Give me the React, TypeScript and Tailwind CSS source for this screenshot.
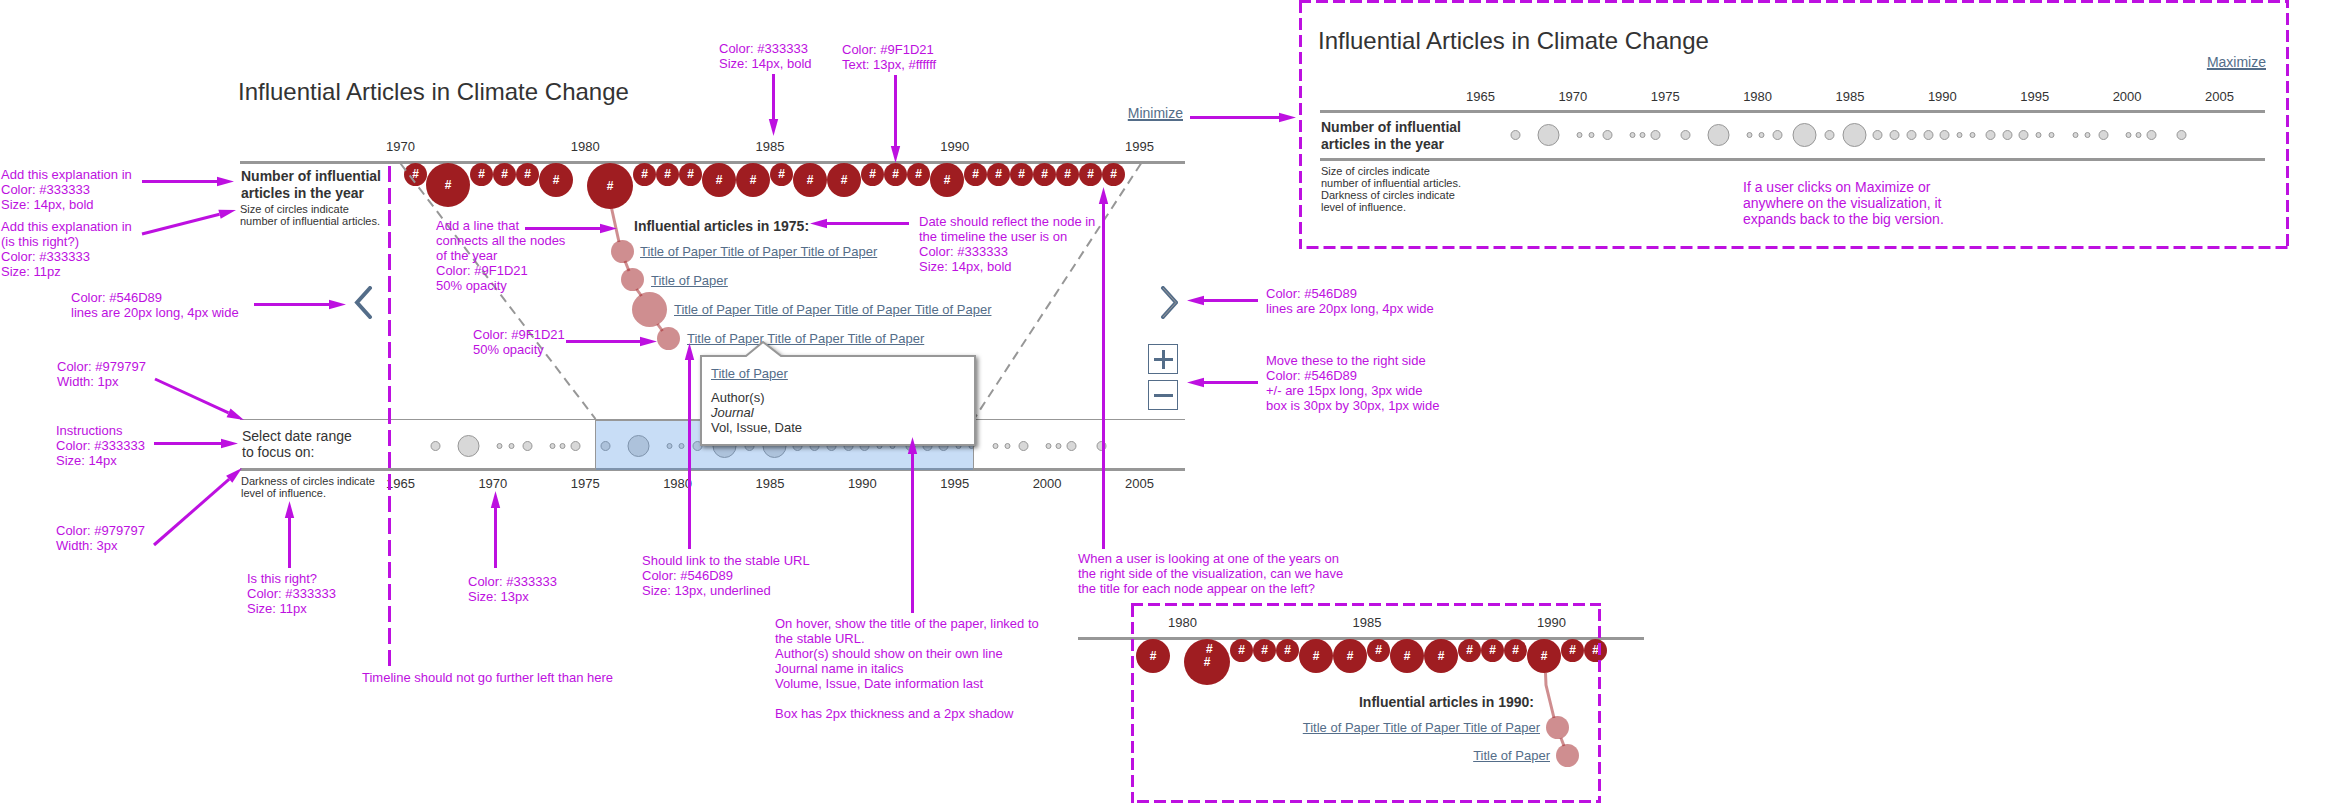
import type { ReactNode } from "react";

type Point = [number, number];

const NODE_CLASSES = {
  s: "size-[23px]",
  m: "size-[34px]",
  l: "size-[44px] -ml-px",
  xl: "size-[46px] ml-[14px]",
};
type NodeSize = keyof typeof NODE_CLASSES;

const MAIN_NODES: NodeSize[] = [
  "s", "l", "s", "s", "s", "m", "xl", "s", "s", "s", "m", "m", "s", "m", "m",
  "s", "s", "s", "m", "s", "s", "s", "s", "s", "s", "s",
];
const INSET_NODES = MAIN_NODES.slice(5, 21);

const OVERVIEW_YEARS = [1965, 1970, 1975, 1980, 1985, 1990, 1995, 2000, 2005];

/* [centre x, radius] measured from the left end of the axis */
const DOTS: Point[] = [
  [195.5, 4.5], [228.5, 10.5], [259.5, 2.5], [271.5, 2.5], [287.5, 4.5], [312.5, 2.5],
  [322.5, 2.5], [335.5, 4.5], [365.5, 4.5], [398.5, 10.5], [429.5, 2.5], [441.5, 2.5],
  [457.5, 4.5], [484.5, 11.5], [509.5, 4.5], [534.5, 11.5], [557.5, 4.5], [574.5, 4.5],
  [591.5, 4.5], [608.5, 4.5], [624.5, 4.5], [639.5, 2.5], [652.5, 2.5], [670.5, 4.5],
  [687.5, 4.5], [703.5, 4.5], [718.5, 2.5], [731.5, 2.5], [755.5, 2.5], [767.5, 2.5],
  [783.5, 4.5], [808.5, 2.5], [818.5, 2.5], [831.5, 4.5], [861.5, 4.5],
];

const ARROWS: [Point, Point][] = [
  [[142, 181.5], [234, 181.5]],
  [[142, 234], [236, 210]],
  [[254, 304.5], [346, 304.5]],
  [[155, 379], [244, 420]],
  [[154, 443.5], [238, 443.5]],
  [[154, 545], [242, 468]],
  [[289.5, 568], [289.5, 501]],
  [[495.5, 568], [495.5, 491]],
  [[689.5, 549], [689.5, 343]],
  [[912.5, 613], [912.5, 437]],
  [[1103.5, 549], [1103.5, 187]],
  [[773.5, 74], [773.5, 136]],
  [[895.5, 75], [895.5, 163]],
  [[525, 228.5], [617, 228.5]],
  [[566, 341.5], [657, 341.5]],
  [[909, 223.5], [810, 223.5]],
  [[1190, 117.5], [1296, 117.5]],
  [[1258, 300.5], [1187, 300.5]],
  [[1258, 382.5], [1187, 382.5]],
];

function Arrow({ from, to }: { from: Point; to: Point }) {
  const length = Math.hypot(to[0] - from[0], to[1] - from[1]);
  const ux = (to[0] - from[0]) / length;
  const uy = (to[1] - from[1]) / length;
  const bx = to[0] - ux * 17;
  const by = to[1] - uy * 17;
  return (
    <>
      <line x1={from[0]} y1={from[1]} x2={bx} y2={by} stroke="#BD10E0" strokeWidth="3" />
      <polygon
        fill="#BD10E0"
        points={`${to[0]},${to[1]} ${bx - uy * 4.7},${by + ux * 4.7} ${bx + uy * 4.7},${by - ux * 4.7}`}
      />
    </>
  );
}

function Note({ at, children }: { at: string; children: ReactNode }) {
  return (
    <p className={`absolute whitespace-pre text-[13px] leading-[15px] text-[#BD10E0] ${at}`}>
      {children}
    </p>
  );
}

function PaperLink({ times = 1 }: { times?: number }) {
  return (
    <a href="#paper" className="whitespace-nowrap text-[13px] leading-[15px] text-[#546D89] underline">
      {Array(times).fill("Title of Paper").join(" ")}
    </a>
  );
}

function Years({ years, className }: { years: number[]; className: string }) {
  return (
    <div className={`flex justify-between text-[13px] leading-[15px] ${className}`}>
      {years.map((year) => (
        <span key={year}>{year}</span>
      ))}
    </div>
  );
}

function Nodes({ sizes }: { sizes: NodeSize[] }) {
  return (
    <>
      {sizes.map((size, i) => (
        <button
          key={i}
          type="button"
          className={`flex shrink-0 items-center justify-center rounded-full bg-[#9F1D21] text-[12px] font-bold leading-[13px] text-white ${NODE_CLASSES[size]}`}
        >
          #
        </button>
      ))}
    </>
  );
}

function Dots({ className }: { className: string }) {
  return (
    <svg className={`block h-6 w-full ${className}`} aria-hidden="true">
      {DOTS.map(([x, r]) => (
        <circle key={x} cx={x} cy="12" r={r} fill="#D8D8D8" stroke="#979797" />
      ))}
    </svg>
  );
}

function Overview() {
  return (
    <section className="relative h-[249px] w-[990px] shrink-0 pl-[21px] pr-6 pt-4">
      <svg
        className="pointer-events-none absolute inset-0 size-full"
        viewBox="0 0 990 249"
        stroke="#BD10E0"
        strokeWidth="3"
        strokeDasharray="12 5"
        aria-hidden="true"
      >
        <path d="M0 1.5H990M1.5 1V249M988.5 247.5H0M988.5 246V0" />
      </svg>
      <h2 className="-ml-0.5 h-[38px] text-2xl leading-[50px]">Influential Articles in Climate Change</h2>
      <div className="-mr-px flex justify-end">
        <a href="#maximize" className="text-sm leading-4 text-[#546D89] underline decoration-2">
          Maximize
        </a>
      </div>
      <Years years={OVERVIEW_YEARS} className="ml-[146px] mr-[31px] mt-[19px]" />
      <div className="mt-[6px] flex h-[51px] items-center border-y-[3px] border-[#979797]">
        <h3 className="w-0 shrink-0 whitespace-pre pl-px text-sm font-bold leading-[17px]">
          {"Number of influential\narticles in the year"}
        </h3>
        <Dots className="-ml-px mb-0.5" />
      </div>
      <p className="mt-1 pl-px text-[11px] leading-3">
        Size of circles indicate
        <br />
        number of influential articles.
        <br />
        Darkness of circles indicate
        <br />
        level of influence.
      </p>
      <p className="absolute left-[444px] top-[179px] whitespace-pre text-sm leading-4 text-[#BD10E0]">
        {"If a user clicks on Maximize or\nanywhere on the visualization, it\nexpands back to the big version."}
      </p>
    </section>
  );
}

function Tooltip() {
  return (
    <div className="absolute left-[460px] top-[341px] h-[105px] w-[276px]">
      <svg
        className="absolute inset-0 size-full overflow-visible drop-shadow-[2px_2px_2px_rgba(0,0,0,0.5)]"
        viewBox="0 0 276 105"
        aria-hidden="true"
      >
        <path d="M1 15H46L63 1L81 15H275V104H1Z" fill="#fff" stroke="#979797" strokeWidth="2" />
      </svg>
      <div className="relative flex flex-col items-start px-[11px] pt-[25px] text-[13px] leading-[15px]">
        <PaperLink />
        <p className="mt-[9px]">Author(s)</p>
        <p className="italic">Journal</p>
        <p>Vol, Issue, Date</p>
      </div>
    </div>
  );
}

function Timeline() {
  return (
    <section className="relative w-[945px] shrink-0 pt-[76px]">
      <h1 className="-ml-0.5 h-8 text-2xl leading-8">Influential Articles in Climate Change</h1>
      <div className="flex justify-end pr-0.5">
        <a href="#minimize" className="mt-[-3px] text-sm leading-4 text-[#546D89] underline decoration-2">
          Minimize
        </a>
      </div>
      <Years years={[1970, 1980, 1985, 1990, 1995]} className="ml-[146px] mr-[31px] mt-[18px]" />

      <div className="mt-[7px] flex border-t-[3px] border-[#979797]">
        <div className="w-[164px] shrink-0 whitespace-nowrap pt-1">
          <h2 className="pl-px text-sm font-bold leading-[17px]">
            Number of influential
            <br />
            articles in the year
          </h2>
          <p className="mt-px text-[11px] leading-3">
            Size of circles indicate
            <br />
            number of influential articles.
          </p>
        </div>
        <div className="-mt-px flex items-start">
          <Nodes sizes={MAIN_NODES} />
        </div>
      </div>

      <div className="relative flex h-[192px] justify-between pl-[114px]">
        <button type="button" aria-label="Earlier" className="mt-[59px] h-[33px] w-5">
          <svg viewBox="0 0 20 33" className="size-full" fill="none" stroke="#546D89" strokeWidth="4">
            <path d="M16 2L3 16.500L16 31" strokeLinecap="round" />
          </svg>
        </button>
        <svg
          className="pointer-events-none absolute left-[340px] top-[-22px] h-[150px] w-[120px] overflow-visible"
          viewBox="580 205 120 150"
          aria-hidden="true"
        >
          <g stroke="#9F1D21" strokeOpacity="0.5" strokeWidth="3" fill="none">
            <path d="M611.500 208L619 242M625 261L629 271M636.500 289L641.500 296M657.500 324L662.500 331" />
          </g>
          <g fill="#9F1D21" fillOpacity="0.5">
            <circle cx="622.500" cy="251.500" r="11.500" />
            <circle cx="632.500" cy="279.500" r="11.500" />
            <circle cx="649.500" cy="309.500" r="17.500" />
            <circle cx="668.500" cy="338.500" r="11.500" />
          </g>
        </svg>
        <div className="absolute left-[394px] top-[-9px]">
          <h3 className="text-sm font-bold leading-[17px]">Influential articles in 1975:</h3>
          <ul className="mt-[9px] flex flex-col gap-[14px]">
            <li className="flex pl-[6px]"><PaperLink times={3} /></li>
            <li className="flex pl-[17px]"><PaperLink /></li>
            <li className="flex pl-10"><PaperLink times={4} /></li>
            <li className="flex pl-[53px]"><PaperLink times={3} /></li>
          </ul>
        </div>
        <div className="flex flex-col items-end pr-[7px]">
          <button type="button" aria-label="Later" className="mt-[59px] h-[33px] w-5">
            <svg viewBox="0 0 20 33" className="size-full" fill="none">
              <path d="M5 2L18 16.500L5 31" stroke="#546D89" strokeWidth="4" strokeLinecap="round" />
              <path d="M5 2L18 16.500L5 31" stroke="#979797" strokeWidth="1" />
            </svg>
          </button>
          <button type="button" aria-label="Zoom in" className="mt-[25px] size-[30px] border border-[#546D89]">
            <svg viewBox="0 0 28 28" className="size-full" stroke="#546D89" strokeWidth="3">
              <path d="M5 14.500H24M14.500 5V24" />
            </svg>
          </button>
          <button type="button" aria-label="Zoom out" className="mt-[6px] size-[30px] border border-[#546D89]">
            <svg viewBox="0 0 28 28" className="size-full" stroke="#546D89" strokeWidth="3">
              <path d="M5 14.500H24" />
            </svg>
          </button>
        </div>
      </div>

      <div className="relative flex h-[52px] items-center border-b-[3px] border-t border-[#979797]">
        <p className="w-0 shrink-0 whitespace-pre pl-0.5 text-sm leading-4">
          {"Select date range\nto focus on:"}
        </p>
        <Dots className="-ml-0.5 mt-[3px]" />
        <div className="absolute -top-px left-[355px] h-[51px] w-[379px] border-x border-t-2 border-[#979797] bg-[#4A90E2]/30" />
      </div>
      <div className="flex">
        <p className="w-0 whitespace-nowrap pl-px pt-1 text-[11px] leading-3">
          Darkness of circles indicate
          <br />
          level of influence.
        </p>
        <Years years={OVERVIEW_YEARS} className="ml-[145px] mr-[31px] mt-[5px] grow" />
      </div>

      <svg
        className="pointer-events-none absolute inset-x-0 top-0 h-[420px] w-full"
        stroke="#979797"
        strokeWidth="2"
        strokeDasharray="9 6"
        aria-hidden="true"
      >
        <path d="M160.500 163.500L355.500 419M901 163.500L734 419" />
      </svg>
      <Tooltip />
    </section>
  );
}

function Inset() {
  return (
    <section className="relative ml-[1078px] h-[200px] w-[566px] pt-3">
      <Years years={[1980, 1985, 1990]} className="ml-[90px] mr-[78px]" />
      <div className="mt-[7px] border-t-[3px] border-[#979797]" />
      <div className="-mt-px ml-[58px] flex items-start">
        <Nodes sizes={INSET_NODES} />
      </div>
      <span className="absolute left-[128px] top-[40px] text-[12px] font-bold leading-[13px] text-white">#</span>
      <div className="flex w-[472px] flex-col items-end pt-[9px]">
        <h3 className="mr-[16px] text-sm font-bold leading-[17px]">Influential articles in 1990:</h3>
        <div className="mr-[10px] mt-[9px] flex"><PaperLink times={3} /></div>
        <div className="mt-[13px] flex"><PaperLink /></div>
      </div>
      <svg
        className="pointer-events-none absolute inset-0 size-full overflow-visible"
        viewBox="1078 603 566 200"
        aria-hidden="true"
      >
        <path
          d="M1545.500 673L1546 685L1554 718M1561 738L1564 746"
          fill="none"
          stroke="#9F1D21"
          strokeOpacity="0.5"
          strokeWidth="3"
        />
        <circle cx="1557.500" cy="727.500" r="11.500" fill="#9F1D21" fillOpacity="0.5" />
        <circle cx="1567.500" cy="755.500" r="11.500" fill="#9F1D21" fillOpacity="0.5" />
        <g stroke="#BD10E0" strokeWidth="3" strokeDasharray="12 5">
          <path d="M1131 604.500H1601M1132.500 605V803M1137 801.500H1601" />
          <path d="M1599.500 801V603" strokeDashoffset="7" />
        </g>
      </svg>
    </section>
  );
}

function Annotations() {
  return (
    <div className="pointer-events-none absolute inset-0">
      <svg className="absolute inset-0 size-full" aria-hidden="true">
        <path d="M389.500 166V666" stroke="#BD10E0" strokeWidth="3" strokeDasharray="16 6" />
        {ARROWS.map(([from, to], i) => (
          <Arrow key={i} from={from} to={to} />
        ))}
      </svg>
      <Note at="left-px top-[167px]">{"Add this explanation in\nColor: #333333\nSize: 14px, bold"}</Note>
      <Note at="left-px top-[219px]">{"Add this explanation in\n(is this right?)\nColor: #333333\nSize: 11pz"}</Note>
      <Note at="left-[71px] top-[290px]">{"Color: #546D89\nlines are 20px long, 4px wide"}</Note>
      <Note at="left-[57px] top-[359px]">{"Color: #979797\nWidth: 1px"}</Note>
      <Note at="left-[56px] top-[423px]">{"Instructions\nColor: #333333\nSize: 14px"}</Note>
      <Note at="left-[56px] top-[523px]">{"Color: #979797\nWidth: 3px"}</Note>
      <Note at="left-[247px] top-[571px]">{"Is this right?\nColor: #333333\nSize: 11px"}</Note>
      <Note at="left-[362px] top-[670px]">Timeline should not go further left than here</Note>
      <Note at="left-[468px] top-[574px]">{"Color: #333333\nSize: 13px"}</Note>
      <Note at="left-[642px] top-[553px]">{"Should link to the stable URL\nColor: #546D89\nSize: 13px, underlined"}</Note>
      <Note at="left-[775px] top-[616px]">
        {"On hover, show the title of the paper, linked to\nthe stable URL.\nAuthor(s) should show on their own line\nJournal name in italics\nVolume, Issue, Date information last\n\nBox has 2px thickness and a 2px shadow"}
      </Note>
      <Note at="left-[1078px] top-[551px]">
        {"When a user is looking at one of the years on\nthe right side of the visualization, can we have\nthe title for each node appear on the left?"}
      </Note>
      <Note at="left-[719px] top-[41px]">{"Color: #333333\nSize: 14px, bold"}</Note>
      <Note at="left-[842px] top-[42px]">{"Color: #9F1D21\nText: 13px, #ffffff"}</Note>
      <Note at="left-[436px] top-[218px]">
        {"Add a line that\nconnects all the nodes\nof the year\nColor: #9F1D21\n50% opacity"}
      </Note>
      <Note at="left-[473px] top-[327px]">{"Color: #9F1D21\n50% opacity"}</Note>
      <Note at="left-[919px] top-[214px]">
        {"Date should reflect the node in\nthe timeline the user is on\nColor: #333333\nSize: 14px, bold"}
      </Note>
      <Note at="left-[1266px] top-[286px]">{"Color: #546D89\nlines are 20px long, 4px wide"}</Note>
      <Note at="left-[1266px] top-[353px]">
        {"Move these to the right side\nColor: #546D89\n+/- are 15px long, 3px wide\nbox is 30px by 30px, 1px wide"}
      </Note>
    </div>
  );
}

export default function App() {
  return (
    <main className="relative bg-white font-['Liberation_Sans',Arial,sans-serif] text-[#333333]">
      <div className="flex min-h-[603px] items-start gap-[114px] pl-[240px]">
        <Timeline />
        <Overview />
      </div>
      <Inset />
      <Annotations />
    </main>
  );
}
